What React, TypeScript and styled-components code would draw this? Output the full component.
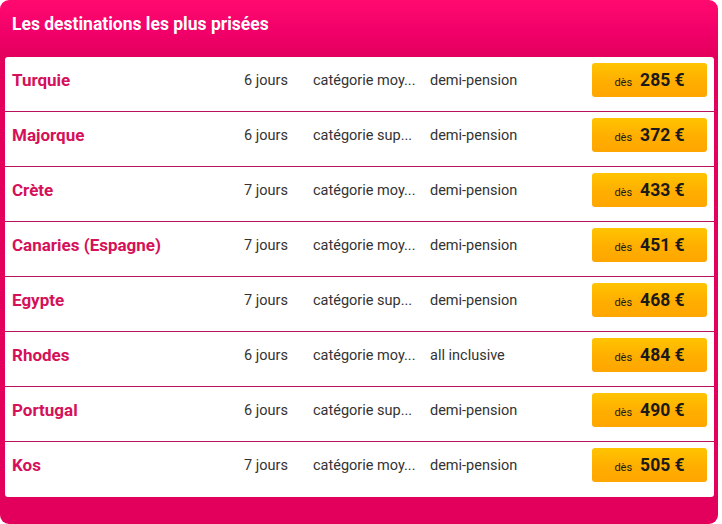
import React from "react";
import styled, { createGlobalStyle } from "styled-components";

const Global = createGlobalStyle`
  html, body { margin: 0; padding: 0; background: #ffffff; }
  body { font-family: Roboto, "Liberation Sans", sans-serif; }
`;

const Panel = styled.div`
  width: 718px;
  height: 524px;
  box-sizing: border-box;
  border-radius: 9px;
  background: linear-gradient(180deg, #ff0a6f 0px, #f2006a 30px, #e2005c 60px, #e2005c 100%);
  display: flex;
  flex-direction: column;
`;

const Header = styled.h2`
  margin: 0;
  height: 57px;
  box-sizing: border-box;
  padding: 14px 0 0 12px;
  font-size: 17.5px;
  font-weight: 700;
  color: #ffffff;
`;

const List = styled.ul`
  list-style: none;
  margin: 0 4px 0 5px;
  padding: 0;
  background: #ffffff;
  border-radius: 3px;
`;

const Row = styled.li<{ $last?: boolean }>`
  display: grid;
  grid-template-columns: 232px 69px 117px 1fr 115px;
  align-items: center;
  height: 55px;
  box-sizing: border-box;
  padding: 6px 7px 15px 7px;
  border-bottom: 1px solid ${(p) => (p.$last ? "transparent" : "#b8125e")};
`;

const Name = styled.span`
  font-size: 17px;
  font-weight: 700;
  color: #d41159;
`;

const Cell = styled.span`
  font-size: 14.5px;
  color: #333333;
  white-space: nowrap;
`;

const PriceButton = styled.button`
  height: 34px;
  border: none;
  border-radius: 3px;
  background: linear-gradient(180deg, #ffc400 0%, #ffae00 55%, #ffa600 100%);
  display: flex;
  align-items: baseline;
  justify-content: center;
  gap: 8px;
  padding: 0;
  padding-top: 7px;
  font-family: Roboto, "Liberation Sans", sans-serif;
  color: #1a1a1a;
  cursor: pointer;
`;

const From = styled.span`
  font-size: 11px;
`;

const Price = styled.span`
  font-size: 17.5px;
  font-weight: 700;
`;

const rows = [
  ["Turquie", "6 jours", "catégorie moy...", "demi-pension", "285"],
  ["Majorque", "6 jours", "catégorie sup...", "demi-pension", "372"],
  ["Crète", "7 jours", "catégorie moy...", "demi-pension", "433"],
  ["Canaries (Espagne)", "7 jours", "catégorie moy...", "demi-pension", "451"],
  ["Egypte", "7 jours", "catégorie sup...", "demi-pension", "468"],
  ["Rhodes", "6 jours", "catégorie moy...", "all inclusive", "484"],
  ["Portugal", "6 jours", "catégorie sup...", "demi-pension", "490"],
  ["Kos", "7 jours", "catégorie moy...", "demi-pension", "505"],
];

export default function App() {
  return (
    <>
      <Global />
      <Panel>
        <Header>Les destinations les plus prisées</Header>
        <List>
          {rows.map(([name, days, cat, board, price], i) => (
            <Row key={name} $last={i === rows.length - 1}>
              <Name>{name}</Name>
              <Cell>{days}</Cell>
              <Cell>{cat}</Cell>
              <Cell>{board}</Cell>
              <PriceButton>
                <From>dès</From>
                <Price>{price} €</Price>
              </PriceButton>
            </Row>
          ))}
        </List>
      </Panel>
    </>
  );
}
